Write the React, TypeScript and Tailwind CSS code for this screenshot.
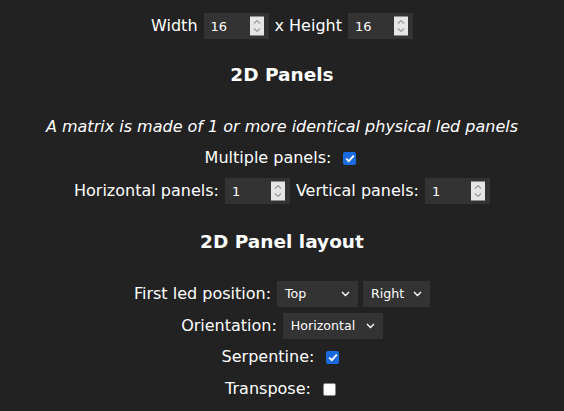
import React from "react";

function Spin() {
  return (
    <span className="absolute right-[5px] top-1/2 -translate-y-1/2 w-[14px] h-[19px] bg-[#e6e6e6] flex flex-col items-center justify-center gap-[3px]">
      <svg width="8" height="5" viewBox="0 0 8 5" fill="none">
        <path d="M1 4 L4 1 L7 4" stroke="#9a9a9a" strokeWidth="1.2" />
      </svg>
      <svg width="8" height="5" viewBox="0 0 8 5" fill="none">
        <path d="M1 1 L4 4 L7 1" stroke="#9a9a9a" strokeWidth="1.2" />
      </svg>
    </span>
  );
}

function NumBox({ value }: { value: string }) {
  return (
    <span className="relative inline-flex items-center w-[65px] h-[26px] bg-[#333] pl-[7px] text-[13px] leading-none text-left">
      {value}
      <Spin />
    </span>
  );
}

function Select({ value, w }: { value: string; w: string }) {
  return (
    <span
      className={`relative inline-flex items-center h-[26px] bg-[#333] pl-[8px] text-[12.6px] leading-none text-left ${w}`}
    >
      {value}
      <svg
        className="absolute right-[8px] top-1/2 -translate-y-1/2"
        width="9"
        height="6"
        viewBox="0 0 9 6"
        fill="none"
      >
        <path d="M1 1 L4.5 4.5 L8 1" stroke="#fff" strokeWidth="1.4" />
      </svg>
    </span>
  );
}

function Check({ on }: { on: boolean }) {
  if (on) {
    return (
      <span className="inline-flex items-center justify-center w-[13px] h-[13px] ml-[6px] mr-[3px] rounded-[2px] bg-[#1a6be0]">
        <svg width="10" height="9" viewBox="0 0 10 9" fill="none">
          <path d="M1.2 4.6 L3.8 7.2 L8.8 1.6" stroke="#fff" strokeWidth="1.8" />
        </svg>
      </span>
    );
  }
  return (
    <span className="inline-block w-[13px] h-[13px] ml-[6px] mr-[3px] rounded-[2px] bg-white border border-[#858585]" />
  );
}

function Row({ children, className = "" }: { children: React.ReactNode; className?: string }) {
  return <div className={`flex items-center justify-center h-[30px] gap-[6px] ${className}`}>{children}</div>;
}

export default function App() {
  return (
    <div className="min-h-screen bg-[#222] text-white font-['DejaVu_Sans','Verdana',sans-serif] text-[16px] pt-[11px]">
      <Row>
        <span>Width</span>
        <NumBox value="16" />
        <span>x Height</span>
        <NumBox value="16" />
      </Row>
      <Row className="mt-[19px] font-bold text-[18.5px]">2D Panels</Row>
      <Row className="mt-[22px] italic">A matrix is made of 1 or more identical physical led panels</Row>
      <Row className="mt-[1px]">
        <span>Multiple panels:</span>
        <Check on />
      </Row>
      <Row className="mt-[3px]">
        <span>Horizontal panels:</span>
        <NumBox value="1" />
        <span>Vertical panels:</span>
        <NumBox value="1" />
      </Row>
      <Row className="mt-[21px] font-bold text-[18.5px]">2D Panel layout</Row>
      <Row className="mt-[22px]">
        <span>First led position:</span>
        <span className="flex gap-[5px]">
          <Select value="Top" w="w-[81px]" />
          <Select value="Right" w="w-[67px]" />
        </span>
      </Row>
      <Row className="mt-[2px]">
        <span>Orientation:</span>
        <Select value="Horizontal" w="w-[100px]" />
      </Row>
      <Row className="mt-[1px]">
        <span>Serpentine:</span>
        <Check on />
      </Row>
      <Row className="mt-[2px]">
        <span>Transpose:</span>
        <Check on={false} />
      </Row>
    </div>
  );
}
